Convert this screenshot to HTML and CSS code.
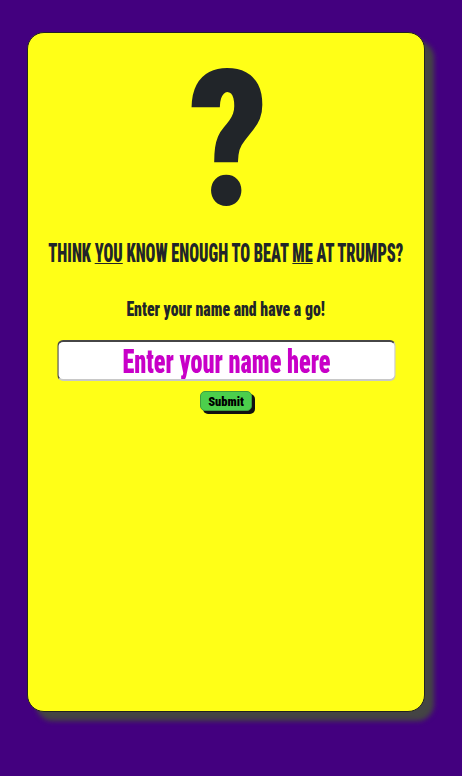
FILE: index.html
```
<!DOCTYPE html>
<html>
<head>
<meta charset="utf-8">
<link rel="stylesheet" href="styles.css">
</head>
<body>
<main class="card">
  <div class="qmark"><span class="squeeze qglyph">?</span></div>
  <h1 class="title"><span class="squeeze">THINK <u>YOU</u> KNOW ENOUGH TO BEAT <u>ME</u> AT TRUMPS?</span></h1>
  <p class="lead"><span class="squeeze">Enter your name and have a go!</span></p>
  <form class="form">
    <div class="field">
      <input class="name" type="text" placeholder="Enter your name here" autofocus>
    </div>
    <button class="submit" type="button">Submit</button>
  </form>
</main>
</body>
</html>
```

FILE: styles.css
```
html, body {
  margin: 0;
  padding: 0;
}
body {
  background: #43007f;
  min-height: 776px;
  padding: 32px 0 0 27px;
  box-sizing: border-box;
  font-family: Roboto, "Open Sans", sans-serif;
  font-stretch: 75%;
  color: #212529;
  overflow: hidden;
}
.card {
  width: 398px;
  height: 680px;
  box-sizing: border-box;
  background: #ffff17;
  border: 1px solid #222;
  border-radius: 17px;
  box-shadow: 9px 9px 5px #444;
  display: flex;
  flex-direction: column;
  align-items: stretch;
  padding-top: 12px;
}
.squeeze {
  display: inline-block;
  white-space: nowrap;
  flex: none;
}
.qmark,
.title,
.lead,
.field {
  display: flex;
  justify-content: center;
}
.qmark {
  font-weight: 900;
  font-size: 190px;
  line-height: 190px;
  height: 190px;
  color: #212529;
  padding-left: 6px;
}
.qglyph {
  transform: scaleX(0.92);
}
.title {
  font-size: 25px;
  line-height: 30px;
  font-weight: 900;
  margin: 4px 0 0;
}
.title .squeeze {
  transform: scaleX(0.653);
}
.title u {
  text-decoration-thickness: 1px;
  text-underline-offset: 1px;
}
.lead {
  font-size: 20px;
  line-height: 24px;
  font-weight: 900;
  margin: 28px 0 0;
}
.lead .squeeze {
  transform: scaleX(0.79);
}
.form {
  display: flex;
  flex-direction: column;
  align-items: center;
  margin-top: 19px;
}
.field {
  align-self: stretch;
}
.name {
  flex: none;
  width: 475px;
  height: 41px;
  box-sizing: border-box;
  border-style: inset;
  border-width: 2px 2.8px;
  border-color: #9a9a9a #c8c8c8 #c8c8c8 #9a9a9a;
  border-radius: 8.4px / 6px;
  background: #fff;
  text-align: center;
  font-family: inherit;
  font-stretch: 75%;
  font-weight: 900;
  font-size: 34px;
  color: #c800c8;
  padding: 0;
  outline: none;
  caret-color: #000;
  transform: scaleX(0.713);
}
.name::placeholder {
  color: #c800c8;
  opacity: 1;
}
.submit {
  margin-top: 10px;
  width: 52px;
  height: 20px;
  padding: 0;
  background: #4ccf4c;
  border: 1px solid #3d9e3d;
  border-radius: 5px;
  box-shadow: 3px 3px 0 #111;
  font-family: inherit;
  font-stretch: 75%;
  font-weight: 900;
  font-size: 12.5px;
  color: #000;
}
```
